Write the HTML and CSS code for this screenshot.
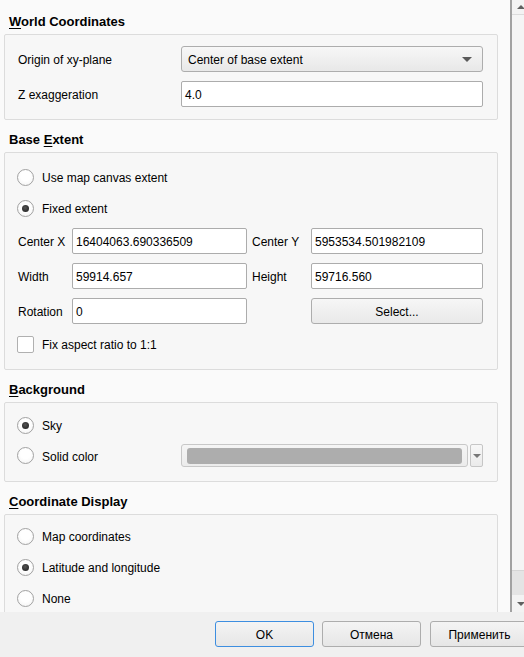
FILE: index.html
```html
<!DOCTYPE html>
<html lang="en">
<head>
<meta charset="utf-8">
<title>3D Map Configuration</title>
<link rel="stylesheet" href="styles.css">
</head>
<body>
<div class="dialog">
  <div class="scroll-frame">
    <div class="content">
      <section class="group">
        <h2 class="group-title"><u>W</u>orld Coordinates</h2>
        <div class="group-box grid-2 world">
          <span class="lbl">Origin of xy-plane</span>
          <div class="combo"><span class="txt">Center of base extent</span><span class="tri"></span></div>
          <span class="lbl">Z exaggeration</span>
          <div class="input"><span class="txt">4.0</span></div>
        </div>
      </section>

      <section class="group">
        <h2 class="group-title">Base <u>E</u>xtent</h2>
        <div class="group-box extent">
          <div class="radio-row"><span class="radio"></span><span class="txt">Use map canvas extent</span></div>
          <div class="radio-row"><span class="radio checked"></span><span class="txt">Fixed extent</span></div>
          <div class="grid-4">
            <span class="lbl">Center X</span>
            <div class="input"><span class="txt">16404063.690336509</span></div>
            <span class="lbl lbl-2">Center Y</span>
            <div class="input"><span class="txt">5953534.501982109</span></div>
            <span class="lbl">Width</span>
            <div class="input"><span class="txt">59914.657</span></div>
            <span class="lbl lbl-2">Height</span>
            <div class="input"><span class="txt">59716.560</span></div>
            <span class="lbl">Rotation</span>
            <div class="input"><span class="txt">0</span></div>
            <span class="lbl lbl-2"></span>
            <div class="button"><span class="txt">Select...</span></div>
          </div>
          <div class="radio-row"><span class="checkbox"></span><span class="txt">Fix aspect ratio to 1:1</span></div>
        </div>
      </section>

      <section class="group">
        <h2 class="group-title"><u>B</u>ackground</h2>
        <div class="group-box background">
          <div class="radio-row"><span class="radio checked"></span><span class="txt">Sky</span></div>
          <div class="grid-2 color-row">
            <div class="radio-row"><span class="radio"></span><span class="txt">Solid color</span></div>
            <div class="color-picker">
              <div class="color-main"><span class="swatch"></span></div>
              <div class="color-drop"><span class="tri small"></span></div>
            </div>
          </div>
        </div>
      </section>

      <section class="group">
        <h2 class="group-title"><u>C</u>oordinate Display</h2>
        <div class="group-box coords">
          <div class="radio-row"><span class="radio"></span><span class="txt">Map coordinates</span></div>
          <div class="radio-row"><span class="radio checked"></span><span class="txt">Latitude and longitude</span></div>
          <div class="radio-row"><span class="radio"></span><span class="txt">None</span></div>
        </div>
      </section>
    </div>
    <div class="vscroll">
      <div class="sb-btn"><span class="arrow-up"></span></div>
      <div class="sb-thumb"></div>
      <div class="sb-track"></div>
      <div class="sb-btn"><span class="arrow-down"></span></div>
    </div>
  </div>
  <div class="buttons">
    <div class="button dlg default"><span class="txt">OK</span></div>
    <div class="button dlg"><span class="txt">Отмена</span></div>
    <div class="button dlg"><span class="txt">Применить</span></div>
  </div>
</div>
</body>
</html>
```
FILE: styles.css
```css
* { box-sizing: border-box; }
html, body { margin: 0; padding: 0; }
body {
  width: 524px;
  height: 657px;
  overflow: hidden;
  background: #f0f0f0;
  font-family: "Liberation Sans", Arial, sans-serif;
  font-size: 12px;
  color: #000;
}
.dialog { display: flex; flex-direction: column; height: 657px; width: 524px; }
.scroll-frame {
  display: flex;
  height: 612px;
  flex: none;
  overflow: hidden;
  background: #fafafa;
}
.content {
  flex: none;
  width: 512px;
  border-right: 2px solid #a2a2a2;
  padding: 12px 12px 0 4px;
  display: flex;
  flex-direction: column;
  gap: 10px;
  overflow: hidden;
}
.txt { padding-top: 2px; white-space: nowrap; }
.lbl { padding-top: 2px; white-space: nowrap; }
.group-title {
  margin: 0 0 3px 5px;
  padding-top: 1px;
  font-size: 13px;
  font-weight: bold;
  line-height: 18px;
}
.group-title u { text-decoration-thickness: 1px; text-underline-offset: 2px; }
.group-box {
  border: 1px solid #dcdcdc;
  border-radius: 2px;
  background: #f7f7f7;
  padding: 11px 14px 12px 13px;
}
.grid-2 {
  display: grid;
  grid-template-columns: 163px 1fr;
  grid-auto-rows: 26px;
  row-gap: 9px;
  align-items: center;
}
.grid-4 {
  display: grid;
  grid-template-columns: 54px 175px 64px 1fr;
  grid-auto-rows: 26px;
  row-gap: 9px;
  align-items: center;
}
.lbl-2 { padding-left: 5px; }
.extent {
  display: flex;
  flex-direction: column;
  gap: 9px;
  padding-top: 13px;
  padding-bottom: 14px;
}
.background {
  display: flex;
  flex-direction: column;
  gap: 8px;
  padding-top: 11px;
  padding-bottom: 14px;
}
.background .color-row { grid-auto-rows: 23px; }
.coords {
  display: flex;
  flex-direction: column;
  gap: 9px;
  padding-top: 10px;
  padding-bottom: 12px;
}
.radio-row {
  display: flex;
  align-items: center;
  gap: 8px;
  height: 22px;
  margin-left: -1px;
}
.radio {
  flex: none;
  width: 17px;
  height: 17px;
  border: 1px solid #a2a2a2;
  border-radius: 50%;
  background: radial-gradient(circle at 50% 40%, #ffffff 40%, #f1f1f1 100%);
  display: flex;
  align-items: center;
  justify-content: center;
}
.radio.checked::after {
  content: "";
  width: 7px;
  height: 7px;
  border-radius: 50%;
  background: radial-gradient(circle at 45% 40%, #555 0%, #2c2c2c 70%);
}
.checkbox {
  flex: none;
  width: 17px;
  height: 17px;
  border: 1px solid #b0b0b0;
  border-radius: 2px;
  background: #fff;
}
.input {
  height: 26px;
  border: 1px solid #acacac;
  border-radius: 2px;
  background: #fff;
  padding-left: 3px;
  display: flex;
  align-items: center;
  overflow: hidden;
}
.combo {
  height: 26px;
  border: 1px solid #adadad;
  border-radius: 3px;
  background: linear-gradient(#f7f7f7, #e8e8e8);
  padding: 0 10px 0 6px;
  display: flex;
  align-items: center;
  justify-content: space-between;
}
.tri {
  width: 0;
  height: 0;
  border-left: 5px solid transparent;
  border-right: 5px solid transparent;
  border-top: 5px solid #5a5a5a;
}
.tri.small {
  border-left-width: 4px;
  border-right-width: 4px;
  border-top-width: 4px;
  border-top-color: #777;
}
.button {
  height: 26px;
  border: 1px solid #adadad;
  border-radius: 3px;
  background: linear-gradient(#f6f6f6, #e9e9e9);
  display: flex;
  align-items: center;
  justify-content: center;
}
.color-picker {
  display: flex;
  gap: 2px;
  height: 23px;
}
.color-main {
  flex: 1;
  border: 1px solid #c8c8c8;
  border-radius: 3px;
  background: linear-gradient(#f5f5f5, #ececec);
  padding: 3px 5px 2px 5px;
  display: flex;
}
.swatch {
  flex: 1;
  background: #adadad;
  border-radius: 3px;
}
.color-drop {
  flex: none;
  width: 13px;
  border: 1px solid #c6c6c6;
  border-radius: 2px;
  background: linear-gradient(#f7f7f7, #ebebeb);
  display: flex;
  align-items: center;
  justify-content: center;
}
.vscroll {
  flex: none;
  width: 17px;
  display: flex;
  flex-direction: column;
  background: #f0f0f0;
}
.sb-btn {
  flex: none;
  height: 14px;
  display: flex;
  align-items: center;
  justify-content: center;
  background: #f3f3f3;
}
.sb-btn:first-child { border-bottom: 1px solid #dcdcdc; height: 15px; }
.sb-btn:last-child { height: 17px; }
.sb-thumb {
  flex: none;
  height: 556px;
  background: #f5f5f5;
  border-bottom: 1px solid #d6d6d6;
}
.sb-track { flex: 1; background: #e4e4e4; }
.arrow-up, .arrow-down {
  width: 0;
  height: 0;
  border-left: 4px solid transparent;
  border-right: 4px solid transparent;
}
.arrow-up { border-bottom: 4px solid #606060; }
.arrow-down { border-top: 4px solid #606060; }
.buttons {
  flex: 1;
  display: flex;
  gap: 8px;
  padding: 9px 0 0 215px;
  background: #f0f0f0;
}
.button.dlg {
  flex: none;
  width: 99px;
  height: 26px;
  background: linear-gradient(#f4f4f4, #e6e6e6);
}
.button.dlg.default { border-color: #3d8ee0; }
.button.dlg + .button.dlg + .button.dlg { margin-left: 1px; }
```
